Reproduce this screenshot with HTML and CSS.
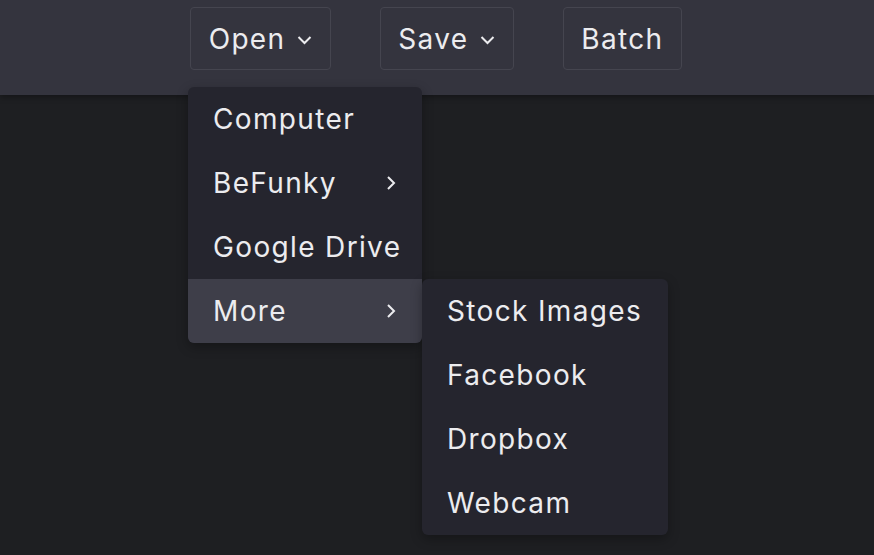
FILE: index.html
```html
<!DOCTYPE html>
<html>
<head>
<meta charset="utf-8">
<link rel="stylesheet" href="styles.css">
</head>
<body>
<header class="toolbar">
  <button class="tbtn">Open <svg class="caret" viewBox="0 0 15 10" width="15" height="10"><path d="M1.5 2 L7.5 8 L13.5 2" fill="none" stroke="currentColor" stroke-width="2"/></svg></button>
  <button class="tbtn">Save <svg class="caret" viewBox="0 0 15 10" width="15" height="10"><path d="M1.5 2 L7.5 8 L13.5 2" fill="none" stroke="currentColor" stroke-width="2"/></svg></button>
  <button class="tbtn">Batch</button>
</header>
<div class="menu main-menu">
  <div class="item">Computer</div>
  <div class="item">BeFunky <svg class="arrow" viewBox="0 0 12 16" width="12" height="16"><path d="M3 2 L9 8 L3 14" fill="none" stroke="currentColor" stroke-width="2"/></svg></div>
  <div class="item">Google Drive</div>
  <div class="item active">More <svg class="arrow" viewBox="0 0 12 16" width="12" height="16"><path d="M3 2 L9 8 L3 14" fill="none" stroke="currentColor" stroke-width="2"/></svg>
    <div class="menu submenu">
      <div class="item">Stock Images</div>
      <div class="item">Facebook</div>
      <div class="item">Dropbox</div>
      <div class="item">Webcam</div>
    </div>
  </div>
</div>
</body>
</html>
```
FILE: styles.css
```css
* { box-sizing: border-box; }
html, body { margin: 0; padding: 0; }
body {
  width: 874px;
  height: 555px;
  background: #1e1f22;
  font-family: Inter, "Noto Sans", sans-serif;
  color: #ececef;
  position: relative;
  overflow: hidden;
}
.toolbar {
  height: 95px;
  background: #34343e;
  display: flex;
  justify-content: center;
  align-items: flex-start;
  gap: 49px;
  padding-top: 7px;
  padding-right: 2px;
  box-shadow: 0 2px 6px rgba(0,0,0,0.35);
}
.tbtn {
  height: 63px;
  background: transparent;
  border: 1px solid #45454f;
  border-radius: 4px;
  color: #ececef;
  font-family: inherit;
  font-size: 28px;
  letter-spacing: 1.3px;
  padding: 0 17.5px;
  display: flex;
  align-items: center;
  gap: 12px;
}
.caret { margin-top: 2px; }
.menu {
  position: absolute;
  background: #25252e;
  border-radius: 6px;
  box-shadow: 0 4px 12px rgba(0,0,0,0.3);
}
.main-menu {
  left: 188px;
  top: 87px;
  width: 234px;
}
.item {
  position: relative;
  height: 64px;
  display: flex;
  align-items: center;
  justify-content: space-between;
  padding: 0 25px 0 25px;
  font-size: 28px;
  letter-spacing: 1.35px;
  white-space: nowrap;
}
.item.active {
  background: #3e3e49;
  border-radius: 0 0 6px 6px;
}
.submenu {
  left: 100%;
  top: 0;
  width: 246px;
}
```
